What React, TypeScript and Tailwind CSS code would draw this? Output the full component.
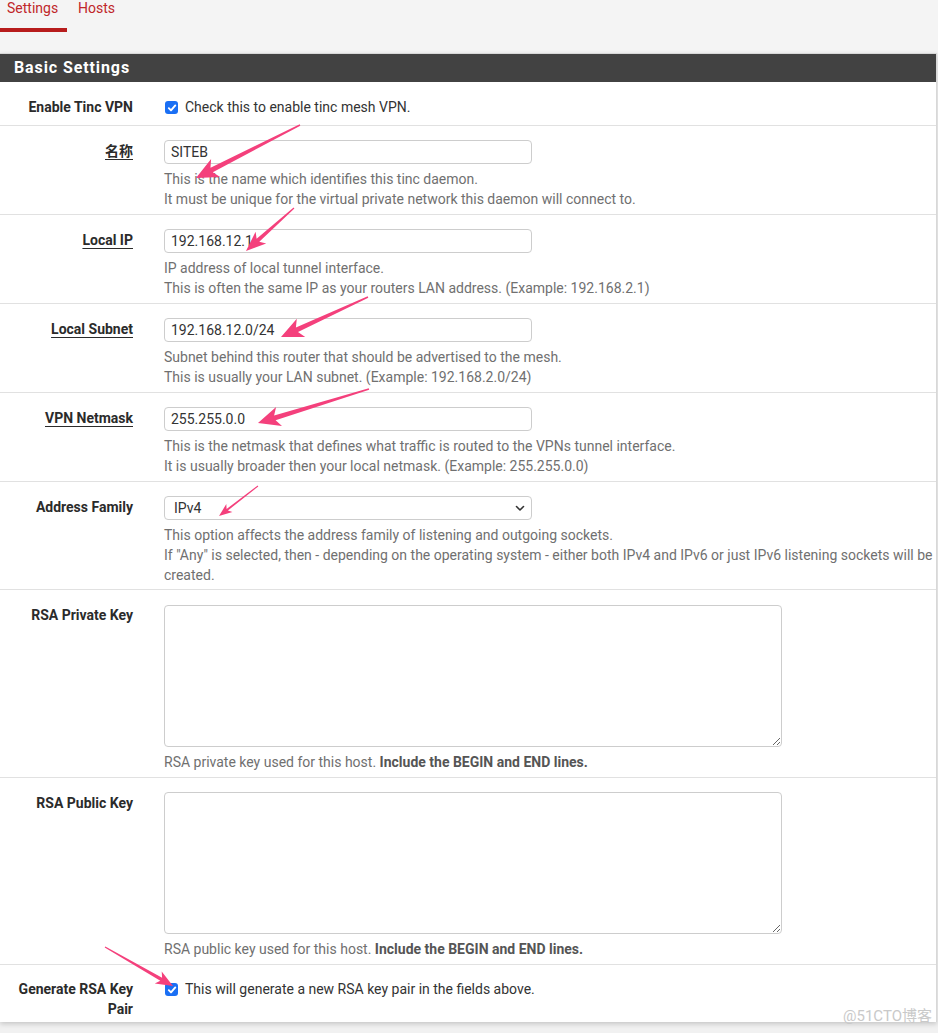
import React from "react";

type Arr = { x1: number; y1: number; x2: number; y2: number; H: number; W: number; t0: number; t1: number };

function arrowPoints(a: Arr): string {
  const dx = a.x2 - a.x1;
  const dy = a.y2 - a.y1;
  const len = Math.hypot(dx, dy);
  const ux = dx / len;
  const uy = dy / len;
  const nx = -uy;
  const ny = ux;
  const bx = a.x2 - ux * a.H;
  const by = a.y2 - uy * a.H;
  const bx2 = a.x2 - ux * (a.H * 0.8);
  const by2 = a.y2 - uy * (a.H * 0.8);
  const pts: [number, number][] = [
    [a.x1 + (nx * a.t0) / 2, a.y1 + (ny * a.t0) / 2],
    [bx2 + (nx * a.t1) / 2, by2 + (ny * a.t1) / 2],
    [bx + nx * a.W, by + ny * a.W],
    [a.x2, a.y2],
    [bx - nx * a.W, by - ny * a.W],
    [bx2 - (nx * a.t1) / 2, by2 - (ny * a.t1) / 2],
    [a.x1 - (nx * a.t0) / 2, a.y1 - (ny * a.t0) / 2],
  ];
  return pts.map((p) => `${p[0].toFixed(1)},${p[1].toFixed(1)}`).join(" ");
}

const arrows: Arr[] = [
  { x1: 300, y1: 125, x2: 196, y2: 178, H: 22, W: 10, t0: 1.5, t1: 5 },
  { x1: 294, y1: 208, x2: 246, y2: 251, H: 20, W: 8, t0: 1.2, t1: 4 },
  { x1: 368, y1: 297, x2: 281, y2: 337, H: 22, W: 10, t0: 1.5, t1: 5 },
  { x1: 369, y1: 389, x2: 258, y2: 423, H: 22, W: 10, t0: 1.5, t1: 5 },
  { x1: 258, y1: 486, x2: 219, y2: 516, H: 13, W: 5, t0: 1, t1: 2 },
  { x1: 105, y1: 947, x2: 173, y2: 986, H: 17, W: 7, t0: 1.2, t1: 3.5 },
];

function Check() {
  return (
    <span className="mt-[1px] flex h-[13px] w-[13px] shrink-0 items-center justify-center rounded-[3px] bg-[#1a6ff4]">
      <svg width="10" height="10" viewBox="0 0 10 10">
        <path d="M1.8 5.2 L4 7.4 L8.3 2.4" fill="none" stroke="#ffffff" strokeWidth="1.9" strokeLinecap="round" strokeLinejoin="round" />
      </svg>
    </span>
  );
}

function Label({ children, u }: { children: React.ReactNode; u?: boolean }) {
  return (
    <div className="w-[148px] shrink-0 pr-[15px] pt-[15px] text-right text-[14px] font-bold leading-[20px] text-[#2b2b2b]">
      <span className={u ? "underline decoration-[1px] underline-offset-[3px]" : ""}>{children}</span>
    </div>
  );
}

function Help({ lines }: { lines: React.ReactNode[] }) {
  return (
    <div className="mt-[5px] text-[14px] leading-[20px] text-[#707070]">
      {lines.map((l, i) => (
        <div key={i} className="whitespace-nowrap">
          {l}
        </div>
      ))}
    </div>
  );
}

function InputRow({ label, value, help }: { label: string; value: string; help: string[] }) {
  return (
    <div className="flex border-t border-[#e1e1e1]">
      <Label u>{label}</Label>
      <div className="flex-1 pb-[5px] pl-[16px] pt-[14px]">
        <div className="flex h-[24px] w-[368px] items-center rounded-[4px] border border-[#cdcdcd] bg-white px-[6px] text-[14px] text-[#333]">
          {value}
        </div>
        <Help lines={help} />
      </div>
    </div>
  );
}

function TextAreaRow({ label, help, pt }: { label: string; help: string; pt: "a" | "b" }) {
  return (
    <div className="flex border-t border-[#e1e1e1]">
      <Label>{label}</Label>
      <div className={`flex-1 pb-[5px] pl-[16px] ${pt === "a" ? "pt-[15px]" : "pt-[14px]"}`}>
        <textarea
          readOnly
          className="block h-[142px] w-[618px] rounded-[4px] border border-[#cdcdcd] bg-white outline-none"
        />
        <Help
          lines={[
            <span>
              {help} <b className="font-bold text-[#555]">Include the BEGIN and END lines.</b>
            </span>,
          ]}
        />
      </div>
    </div>
  );
}

export default function App() {
  return (
    <div className="relative h-[1033px] w-[938px] overflow-hidden bg-[#f1f1f1] font-['Roboto','Noto_Sans_CJK_SC',sans-serif]">
      {/* Tabs */}
      <div className="flex h-[53px] bg-[#f4f4f4]">
        <div className="-mt-[2px] h-[34px] w-[67px] border-b-[4px] border-[#b71c1c] pl-[7px] text-[14px] leading-[20px] text-[#c0262a]">
          Settings
        </div>
        <div className="-mt-[2px] pl-[11px] text-[14px] leading-[20px] text-[#c0262a]">Hosts</div>
      </div>

      {/* Panel */}
      <div className="w-[937px] border-r border-t border-[#d8d8d8] bg-white shadow-[0_2px_5px_rgba(0,0,0,0.18)]">
        <div className="h-[28px] bg-[#424242] pl-[14px] text-[16px] font-bold leading-[28px] tracking-[0.9px] text-white">
          Basic Settings
        </div>

        <div className="flex">
          <Label>Enable Tinc VPN</Label>
          <div className="flex flex-1 items-start gap-[7px] pb-[8px] pl-[17px] pt-[15px] text-[14px] leading-[20px] text-[#333]">
            <span className="pt-[3px]">
              <Check />
            </span>
            <span>Check this to enable tinc mesh VPN.</span>
          </div>
        </div>

        <InputRow
          label="名称"
          value="SITEB"
          help={[
            "This is the name which identifies this tinc daemon.",
            "It must be unique for the virtual private network this daemon will connect to.",
          ]}
        />
        <InputRow
          label="Local IP"
          value="192.168.12.1"
          help={[
            "IP address of local tunnel interface.",
            "This is often the same IP as your routers LAN address. (Example: 192.168.2.1)",
          ]}
        />
        <InputRow
          label="Local Subnet"
          value="192.168.12.0/24"
          help={[
            "Subnet behind this router that should be advertised to the mesh.",
            "This is usually your LAN subnet. (Example: 192.168.2.0/24)",
          ]}
        />
        <InputRow
          label="VPN Netmask"
          value="255.255.0.0"
          help={[
            "This is the netmask that defines what traffic is routed to the VPNs tunnel interface.",
            "It is usually broader then your local netmask. (Example: 255.255.0.0)",
          ]}
        />

        <div className="flex border-t border-[#e1e1e1]">
          <Label>Address Family</Label>
          <div className="flex-1 pb-[4px] pl-[16px] pt-[14px]">
            <div className="flex h-[24px] w-[368px] items-center justify-between rounded-[4px] border border-[#cdcdcd] bg-white pl-[9px] pr-[5px] text-[14px] text-[#333]">
              <span>IPv4</span>
              <svg width="12" height="12" viewBox="0 0 12 12">
                <path d="M2.5 4.5 L6 8 L9.5 4.5" fill="none" stroke="#333" strokeWidth="1.6" strokeLinecap="round" strokeLinejoin="round" />
              </svg>
            </div>
            <Help
              lines={[
                "This option affects the address family of listening and outgoing sockets.",
                'If "Any" is selected, then - depending on the operating system - either both IPv4 and IPv6 or just IPv6 listening sockets will be',
                "created.",
              ]}
            />
          </div>
        </div>

        <TextAreaRow label="RSA Private Key" help="RSA private key used for this host." pt="a" />
        <TextAreaRow label="RSA Public Key" help="RSA public key used for this host." pt="b" />

        <div className="flex border-t border-[#e1e1e1]">
          <div className="w-[148px] shrink-0 pb-[3px] pr-[15px] pt-[14px] text-right text-[14px] font-bold leading-[20px] text-[#2b2b2b]">
            Generate RSA Key
            <br />
            Pair
          </div>
          <div className="flex flex-1 items-start gap-[7px] pl-[17px] pt-[14px] text-[14px] leading-[20px] text-[#333]">
            <span className="pt-[3px]">
              <Check />
            </span>
            <span>This will generate a new RSA key pair in the fields above.</span>
          </div>
        </div>
      </div>

      {/* Watermark */}
      <div className="absolute left-[843px] top-[1006px] text-[15px] leading-[20px] text-[#c9c9c9]">@51CTO博客</div>

      {/* Annotation arrows */}
      <svg className="pointer-events-none absolute left-0 top-0" width="938" height="1033" viewBox="0 0 938 1033">
        {arrows.map((a, i) => (
          <polygon key={i} points={arrowPoints(a)} fill="#f4407c" />
        ))}
      </svg>
    </div>
  );
}
